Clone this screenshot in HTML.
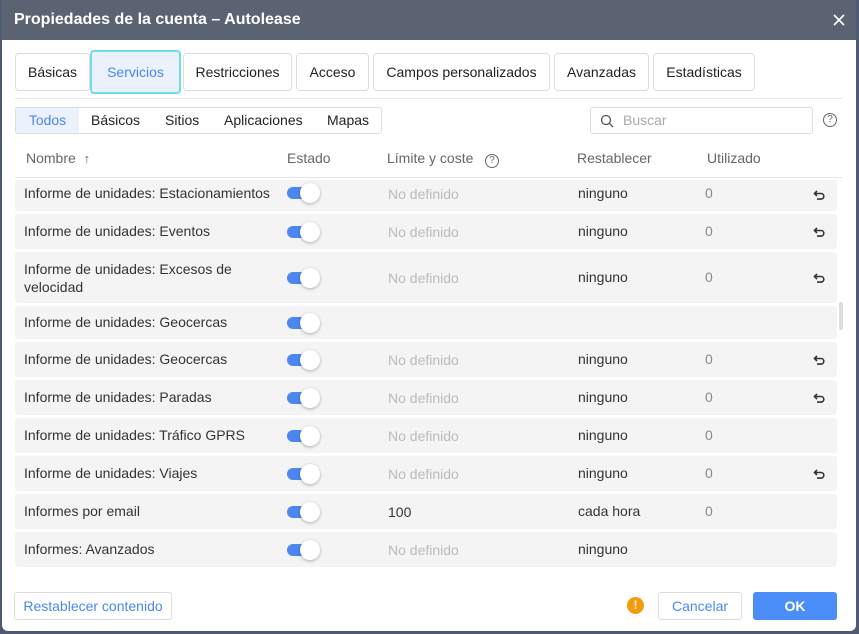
<!DOCTYPE html><html><head><meta charset="utf-8"><style>
*{box-sizing:border-box;margin:0;padding:0}
body{width:859px;height:634px;background:#4e5a72;font-family:"Liberation Sans",sans-serif;font-size:14px;color:#333;position:relative;overflow:hidden}
.dlg{position:absolute;left:2px;top:0;width:854px;height:631px;background:#fff;border-radius:0 0 6px 6px}
.hd{position:absolute;left:0;top:0;width:854px;height:40px;background:#5b6272;color:#fff;font-weight:bold;font-size:16px;line-height:40px;padding-left:12px}
.a{position:absolute}
.tab{position:absolute;top:53px;height:38px;border:1px solid #ddd;border-radius:4px;line-height:36px;text-align:center;font-size:14px;color:#222}
.sub{position:absolute;top:107px;left:13px;width:367px;height:27px;border:1px solid #ddd;border-radius:3px;}
.sub span{position:absolute;top:0;line-height:25px;color:#222}
.th{position:absolute;top:150px;color:#666;font-size:14px}
.row{position:absolute;left:13px;width:822px;background:#f4f4f4;border-radius:3px}
.row div{position:absolute;font-size:14px}
.tg{position:absolute;left:272px;width:34px;height:20px}
.tg:before{content:"";position:absolute;left:0;top:4px;width:28px;height:12px;border-radius:6px;background:#4b87ef}
.tg:after{content:"";position:absolute;left:13px;top:0;width:20px;height:20px;border-radius:50%;background:#fff;box-shadow:0 1px 3px rgba(0,0,0,.3)}
.nd{color:#bbb}
.u{color:#888}
.row .rs{width:12px;height:10px}
</style></head><body><div class="dlg">
<div class="hd">Propiedades de la cuenta – Autolease<svg class="a" style="right:11px;top:14px" width="12" height="12" viewBox="0 0 12 12"><path d="M1 1L11 11M11 1L1 11" stroke="#fff" stroke-width="1.6"/></svg></div>
<div class="tab" style="left:13px;width:75px">Básicas</div>
<div class="tab" style="left:88px;width:91px;border:2px solid #6fdbee;background:#ebf2fe;color:#4b87ef;top:50px;height:44px;line-height:40px">Servicios</div>
<div class="tab" style="left:181px;width:109px">Restricciones</div>
<div class="tab" style="left:294px;width:73px">Acceso</div>
<div class="tab" style="left:371px;width:177px">Campos personalizados</div>
<div class="tab" style="left:552px;width:95px">Avanzadas</div>
<div class="tab" style="left:651px;width:102px">Estadísticas</div>
<div class="a" style="left:13px;top:98px;width:827px;height:1px;background:#e6e6e6"></div>
<div class="sub"><span style="left:0;width:63px;background:#ebf2fe;color:#4b87ef;text-align:center">Todos</span><span style="left:75px">Básicos</span><span style="left:149px">Sitios</span><span style="left:208px">Aplicaciones</span><span style="left:311px">Mapas</span></div>
<div class="a" style="left:588px;top:107px;width:223px;height:27px;border:1px solid #ddd;border-radius:3px"><svg class="a" style="left:9px;top:6px" width="14" height="14" viewBox="0 0 14 14"><circle cx="6" cy="6" r="4.5" fill="none" stroke="#555" stroke-width="1.3"/><path d="M9.3 9.3L13 13" stroke="#555" stroke-width="1.3"/></svg><span class="a" style="left:32px;top:4px;color:#aaa">Buscar</span></div>
<div class="a" style="left:821px;top:113px;width:14px;height:14px;border:1px solid #666;border-radius:50%;font-size:10px;text-align:center;line-height:12px;color:#666">?</div>
<div class="th" style="left:24px">Nombre &nbsp;<b style="font-size:13px">↑</b></div>
<div class="th" style="left:285px">Estado</div>
<div class="th" style="left:385px">Límite y coste &nbsp;&nbsp;<span style="display:inline-block;width:14px;height:14px;border:1px solid #666;border-radius:50%;font-size:10px;text-align:center;line-height:12px">?</span></div>
<div class="th" style="left:575px">Restablecer</div>
<div class="th" style="left:705px">Utilizado</div>
<div class="a" style="left:13px;top:177px;width:827px;height:1px;background:#e3e3e3"></div>
<div class="a" style="left:837px;top:302px;width:4px;height:28px;background:#ddd;border-radius:2px"></div>
<svg width="0" height="0" style="position:absolute"><defs><symbol id="r" viewBox="0 0 12 10"><path d="M4 1L1.5 3.5L4 6M1.5 3.5H8a2.8 2.8 0 0 1 0 5.6H4" fill="none" stroke="#333" stroke-width="1.6"/></symbol></defs></svg>
<div class="row" style="top:180px;height:31px"><div style="left:9px;top:5px">Informe de unidades: Estacionamientos</div><div class="tg" style="top:3px"></div><div class="nd" style="left:373px;top:6px">No definido</div><div style="left:563px;top:5px">ninguno</div><div class="u" style="left:690px;top:5px">0</div><svg class="a rs" style="left:798px;top:10px" width="12" height="10"><use href="#r"/></svg></div>
<div class="row" style="top:214px;height:35px"><div style="left:9px;top:9px">Informe de unidades: Eventos</div><div class="tg" style="top:8px"></div><div class="nd" style="left:373px;top:10px">No definido</div><div style="left:563px;top:9px">ninguno</div><div class="u" style="left:690px;top:9px">0</div><svg class="a rs" style="left:798px;top:13px" width="12" height="10"><use href="#r"/></svg></div>
<div class="row" style="top:252px;height:51px"><div style="left:9px;top:8px;line-height:18px">Informe de unidades: Excesos de<br>velocidad</div><div class="tg" style="top:16px"></div><div class="nd" style="left:373px;top:18px">No definido</div><div style="left:563px;top:17px">ninguno</div><div class="u" style="left:690px;top:17px">0</div><svg class="a rs" style="left:798px;top:21px" width="12" height="10"><use href="#r"/></svg></div>
<div class="row" style="top:306px;height:33px"><div style="left:9px;top:8px">Informe de unidades: Geocercas</div><div class="tg" style="top:7px"></div></div>
<div class="row" style="top:342px;height:35px"><div style="left:9px;top:9px">Informe de unidades: Geocercas</div><div class="tg" style="top:8px"></div><div class="nd" style="left:373px;top:10px">No definido</div><div style="left:563px;top:9px">ninguno</div><div class="u" style="left:690px;top:9px">0</div><svg class="a rs" style="left:798px;top:13px" width="12" height="10"><use href="#r"/></svg></div>
<div class="row" style="top:380px;height:35px"><div style="left:9px;top:9px">Informe de unidades: Paradas</div><div class="tg" style="top:8px"></div><div class="nd" style="left:373px;top:10px">No definido</div><div style="left:563px;top:9px">ninguno</div><div class="u" style="left:690px;top:9px">0</div><svg class="a rs" style="left:798px;top:13px" width="12" height="10"><use href="#r"/></svg></div>
<div class="row" style="top:418px;height:35px"><div style="left:9px;top:9px">Informe de unidades: Tráfico GPRS</div><div class="tg" style="top:8px"></div><div class="nd" style="left:373px;top:10px">No definido</div><div style="left:563px;top:9px">ninguno</div><div class="u" style="left:690px;top:9px">0</div></div>
<div class="row" style="top:456px;height:35px"><div style="left:9px;top:9px">Informe de unidades: Viajes</div><div class="tg" style="top:8px"></div><div class="nd" style="left:373px;top:10px">No definido</div><div style="left:563px;top:9px">ninguno</div><div class="u" style="left:690px;top:9px">0</div><svg class="a rs" style="left:798px;top:13px" width="12" height="10"><use href="#r"/></svg></div>
<div class="row" style="top:494px;height:35px"><div style="left:9px;top:9px">Informes por email</div><div class="tg" style="top:8px"></div><div style="left:373px;top:10px">100</div><div style="left:563px;top:9px">cada hora</div><div class="u" style="left:690px;top:9px">0</div></div>
<div class="row" style="top:532px;height:35px"><div style="left:9px;top:9px">Informes: Avanzados</div><div class="tg" style="top:8px"></div><div class="nd" style="left:373px;top:10px">No definido</div><div style="left:563px;top:9px">ninguno</div></div>
<div class="a" style="left:12px;top:592px;width:158px;height:28px;border:1px solid #ddd;border-radius:3px;color:#4b87ef;text-align:center;line-height:26px">Restablecer contenido</div>
<div class="a" style="left:625px;top:597px;width:17px;height:17px;border-radius:50%;background:#f59a0c;color:#fff;font-weight:bold;font-size:12px;text-align:center;line-height:17px">!</div>
<div class="a" style="left:656px;top:592px;width:84px;height:28px;border:1px solid #ddd;border-radius:3px;color:#4b87ef;text-align:center;line-height:26px">Cancelar</div>
<div class="a" style="left:751px;top:592px;width:84px;height:28px;background:#4b8ef9;border-radius:3px;color:#fff;font-weight:bold;text-align:center;line-height:28px">OK</div>
</div></body></html>
